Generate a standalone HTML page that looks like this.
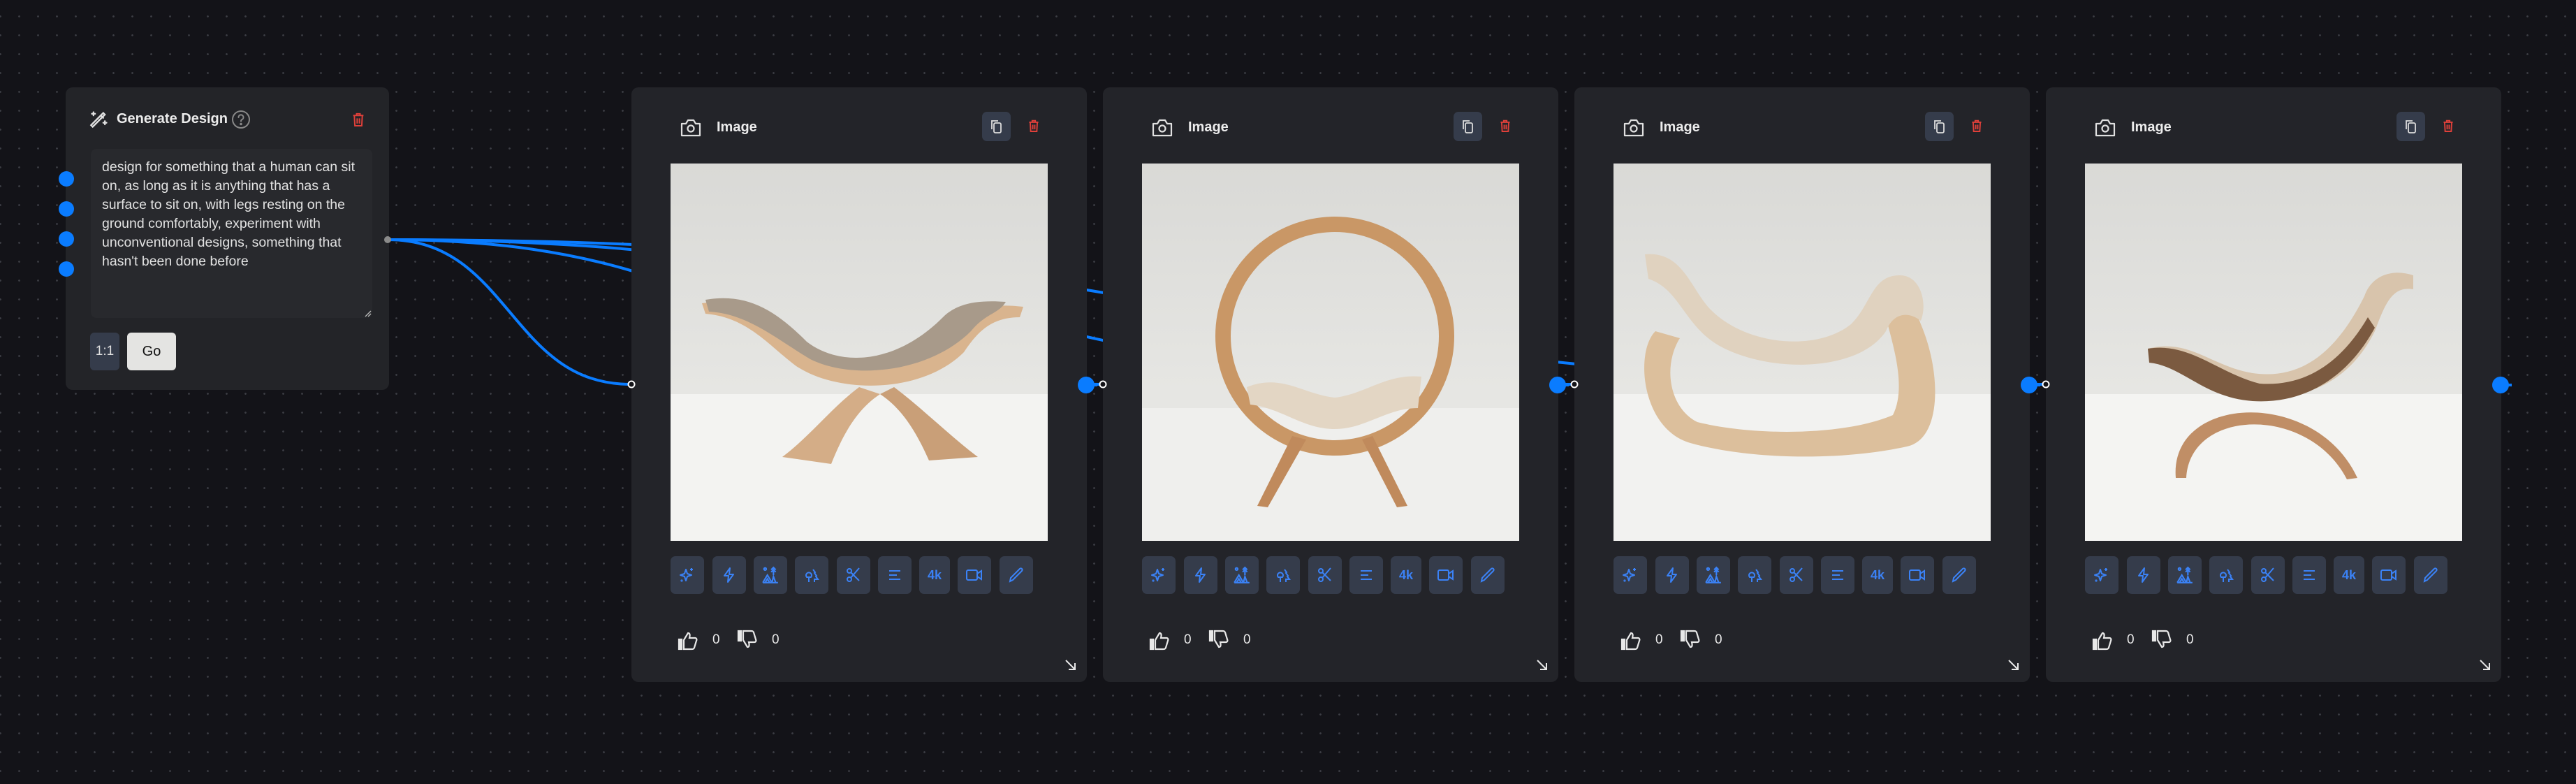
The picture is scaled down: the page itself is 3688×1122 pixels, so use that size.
<!DOCTYPE html>
<html><head><meta charset="utf-8"><style>
*{box-sizing:border-box;margin:0;padding:0}
body{width:3688px;height:1122px;overflow:hidden;background-color:#131318;background-image:radial-gradient(circle,#3c3d44 1.2px,transparent 1.6px);background-size:27px 27px;background-position:-13px 10px;font-family:"Liberation Sans",sans-serif;position:relative}
.abs{position:absolute}
.node{position:absolute;background:#232428;border-radius:10px}
.card{position:absolute;top:125px;width:652px;height:851px;background:#232429;border-radius:10px}
.cam{position:absolute;left:69px;top:44px}
.title{position:absolute;left:122px;top:46px;color:#ececec;font-size:20px;font-weight:bold}
.copy{position:absolute;left:502px;top:35px;width:41px;height:42px;background:#353c4b;border-radius:7px}
.trash{position:absolute;left:568px;top:45px}
.img{position:absolute;left:56px;top:109px;width:540px;height:540px;overflow:hidden}
.tb{position:absolute;top:671px;height:54px;width:48px;background:#353c4b;border-radius:7px;display:flex;align-items:center;justify-content:center;color:#3b82f6;font-weight:bold;font-size:18px}
.rs{position:absolute;left:620px;top:818px}
</style></head><body>
<svg class="abs" style="left:0;top:0" width="3688" height="1122">
<g fill="none" stroke="#0a7cff" stroke-width="4">
<path d="M555 343 C730 343 730 550 903 550"/>
<path d="M555 343 C1067 343 1067 550 1578 550"/>
<path d="M555 343 C1405 343 1405 550 2253 550"/>
<path d="M555 343 C1742 343 1742 550 2928 550"/>
</g>
</svg>

<div class="node" style="left:94px;top:125px;width:463px;height:433px"></div>
<svg class="abs" style="left:128px;top:157px" width="28" height="28" viewBox="0 0 24 24" fill="none" stroke="#e0e0e0" stroke-width="2" stroke-linecap="round"><path d="M4 21L19 6l-2-2L2 19z"/><path d="M14 7l3 3"/><path d="M5 3v4M3 5h4M19 14v4M17 16h4"/></svg>
<div class="abs" style="left:167px;top:159px;color:#ececec;font-size:20px;font-weight:bold">Generate Design</div>
<svg class="abs" style="left:331px;top:157px" width="28" height="28" viewBox="0 0 28 28" fill="none" stroke="#888" stroke-width="2"><circle cx="14" cy="14" r="12"/><path d="M10.5 11a3.5 3.5 0 1 1 5 3c-1 .6-1.5 1.2-1.5 2.5" stroke-linecap="round"/><circle cx="14" cy="20.5" r=".8" fill="#888"/></svg>
<svg class="abs" style="left:504px;top:160px" width="18" height="22" viewBox="0 0 22 26" fill="none" stroke="#e0403a" stroke-width="2.4"><path d="M2 6h18M8 6V3h6v3M4 6l1 18h12l1-18M9 11v9M13 11v9"/></svg>
<div class="abs" style="left:130px;top:213px;width:403px;height:242px;background:#28292d;border-radius:8px"></div>
<div class="abs" style="left:146px;top:226px;white-space:nowrap;color:#e2e2e2;font-size:19.5px;line-height:27px">design for something that a human can sit<br>on, as long as it is anything that has a<br>surface to sit on, with legs resting on the<br>ground comfortably, experiment with<br>unconventional designs, something that<br>hasn't been done before</div>
<svg class="abs" style="left:522px;top:444px" width="10" height="10"><path d="M1 9L9 1M5 9L9 5" stroke="#bbb" stroke-width="1.3"/></svg>
<div class="abs" style="left:129px;top:476px;width:42px;height:54px;background:#353c4b;border-radius:6px;color:#e0e0e0;font-size:19px;line-height:54px;text-align:center">1:1</div>
<div class="abs" style="left:182px;top:476px;width:70px;height:54px;background:#e4e4e2;border-radius:6px;color:#111;font-size:20px;line-height:54px;text-align:center">Go</div>

<svg class="abs" style="left:0;top:0;pointer-events:none" width="3688" height="1122">
<g fill="#0a7cff"><circle cx="95" cy="256" r="11"/><circle cx="95" cy="299" r="11"/><circle cx="95" cy="342" r="11"/><circle cx="95" cy="385" r="11"/></g>
<circle cx="555" cy="343" r="5" fill="#8a8a8a"/>
</svg>

<div class="card" style="left:904px"></div>
<div class="card" style="left:1579px"></div>
<div class="card" style="left:2254px"></div>
<div class="card" style="left:2929px"></div>

<div id="cards"></div>

<script>
const imgs=[
`<rect width="540" height="540" fill="url(#bg)"/><rect y="330" width="540" height="210" fill="#f3f3f1"/>
<path d="M160 420 L230 430 C250 380 270 350 300 330 L270 320 C230 350 200 390 160 420Z" fill="#d4ad87"/>
<path d="M440 420 L370 425 C350 380 330 350 300 330 L320 320 C360 350 400 390 440 420Z" fill="#c99f78"/>
<path d="M45 200 C120 190 150 220 190 260 C240 300 330 300 400 240 C430 205 460 200 505 205 L500 220 C460 220 440 240 420 270 C360 330 240 330 180 290 C140 260 110 220 50 215Z" fill="#d9b48e"/>
<path d="M50 195 C110 185 150 210 195 255 C240 290 320 290 390 220 C410 200 440 195 480 198 C470 215 450 215 430 240 C370 300 260 310 200 280 C150 250 110 215 55 212Z" fill="#a89a8a"/>`,
`<rect width="540" height="540" fill="url(#bg)"/><rect y="350" width="540" height="190" fill="#efefed"/>
<circle cx="276" cy="247" r="160" fill="none" stroke="#c99766" stroke-width="22"/>
<path d="M215 390 L165 490 L180 492 L235 395Z M330 390 L380 490 L365 492 L315 395Z" fill="#c08a5c"/>
<path d="M150 320 C200 300 230 330 276 335 C320 330 350 300 400 305 L395 350 C350 350 320 380 276 380 C230 380 200 350 155 345Z" fill="#e3d6c4"/>`,
`<rect width="540" height="540" fill="url(#bg)"/><rect y="330" width="540" height="210" fill="#f2f2f0"/>
<path d="M60 240 C30 270 40 380 110 400 C200 425 330 425 420 405 C470 395 470 300 440 230 C430 200 400 190 390 220 C400 260 420 320 400 360 C330 390 200 390 120 370 C80 350 70 290 95 250Z" fill="#dcbf9c"/>
<path d="M45 130 C100 125 110 180 140 210 C190 260 290 270 340 230 C370 200 370 160 410 160 C440 160 450 200 440 225 C420 210 400 215 390 240 C350 300 220 300 150 260 C100 230 95 180 50 165Z" fill="#e0d2bf"/>`,
`<rect width="540" height="540" fill="url(#bg)"/><rect y="330" width="540" height="210" fill="#f4f4f2"/>
<path d="M130 450 C120 330 330 320 390 450 L375 452 C320 345 150 350 145 450Z" fill="#c08e66"/>
<path d="M90 265 C150 250 180 290 240 300 C310 310 360 270 400 190 C410 160 440 150 470 160 L470 180 C440 175 430 200 415 240 C380 310 320 340 240 335 C170 330 140 290 95 285Z" fill="#d8c4ac"/>
<path d="M90 265 C150 255 190 300 250 315 C320 320 370 280 405 220 L415 235 C380 300 320 345 240 340 C170 335 140 290 92 285Z" fill="#7b5a40"/>`];
const icons=[
'<svg width="24" height="24" viewBox="0 0 24 24" fill="none" stroke="#3b82f6" stroke-width="2" stroke-linejoin="round"><path d="M10 4l2 6 6 2-6 2-2 6-2-6-6-2 6-2z"/><path d="M18 2v4M16 4h4"/><circle cx="4" cy="20" r=".6"/></svg>',
'<svg width="24" height="24" viewBox="0 0 24 24" fill="none" stroke="#3b82f6" stroke-width="2" stroke-linejoin="round"><path d="M13 2L5 13h6l-1 9 8-11h-6z"/></svg>',
'<svg width="26" height="26" viewBox="0 0 24 24" fill="none" stroke="#3b82f6" stroke-width="2"><circle cx="5" cy="4" r="1.5"/><path d="M16 2v10M13 5l3-3 3 3M13 8l3-3 3 3"/><path d="M2 22l6-10 6 10M5 22l3-5 3 5M2 22h20M14 22l2-8 3 8"/></svg>',
'<svg width="24" height="26" viewBox="0 0 24 24" fill="none" stroke="#3b82f6" stroke-width="2"><path d="M8 22v-6M5 15a4 4 0 1 1 6 0z"/><path d="M14 4l3 4-1 1 3 4-1 1 3 4h-5v4"/></svg>',
'<svg width="24" height="26" viewBox="0 0 24 24" fill="none" stroke="#3b82f6" stroke-width="2"><circle cx="6" cy="6" r="3"/><circle cx="6" cy="18" r="3"/><path d="M8 8l12 12M8 16L20 2"/></svg>',
'<svg width="24" height="24" viewBox="0 0 24 24" fill="none" stroke="#3b82f6" stroke-width="2"><path d="M4 6h16M4 12h11M4 18h16"/></svg>',
'4k',
'<svg width="26" height="24" viewBox="0 0 26 24" fill="none" stroke="#3b82f6" stroke-width="2"><rect x="2" y="5" width="15" height="14" rx="2"/><path d="M17 10l6-4v12l-6-4"/></svg>',
'<svg width="24" height="26" viewBox="0 0 24 24" fill="none" stroke="#3b82f6" stroke-width="2"><path d="M3 21l1-5L17 3a2 2 0 0 1 3 3L7 19z"/></svg>'];
const xs=[56,116,175,234,294,353,412,467,527];
let h='<svg width="0" height="0" style="position:absolute"><defs><linearGradient id="bg" x1="0" y1="0" x2="0" y2="1"><stop offset="0" stop-color="#d9d9d6"/><stop offset=".6" stop-color="#e6e6e3"/></linearGradient></defs></svg>';
[904,1579,2254,2929].forEach((L,i)=>{
 let c=`<div class="abs" style="left:${L}px;top:125px;width:652px;height:851px">`;
 c+=`<svg class="cam" width="32" height="28" viewBox="0 0 32 28" fill="none" stroke="#e0e0e0" stroke-width="2.2" stroke-linejoin="round"><path d="M3 8h6l3-5h8l3 5h6v17H3z"/><circle cx="16" cy="15" r="4.5"/></svg>`;
 c+=`<div class="title">Image</div><div class="copy"><svg style="margin:10px 0 0 11px" width="20" height="22" viewBox="0 0 20 22" fill="none" stroke="#ddd" stroke-width="1.8"><path d="M3 15V3h9"/><rect x="6" y="6" width="10" height="14" rx="2"/></svg></div>`;
 c+=`<svg class="trash" width="16" height="20" viewBox="0 0 22 26" fill="none" stroke="#e0403a" stroke-width="2.6"><path d="M2 6h18M8 6V3h6v3M4 6l1 18h12l1-18M9 11v9M13 11v9"/></svg>`;
 c+=`<svg class="img" viewBox="0 0 540 540">${imgs[i]}</svg>`;
 xs.forEach((x,j)=>{c+=`<div class="tb" style="left:${x}px;width:${j==6?44:48}px">${icons[j]}</div>`});
 c+=`<svg class="abs" style="left:66px;top:778px" width="30" height="28" viewBox="0 0 30 28" fill="none" stroke="#e8e8e8" stroke-width="2.2"><rect x="2" y="12" width="4" height="14" fill="#e8e8e8"/><path d="M9 13l6-10c3 0 3 3 2 7h8c2 0 3 2 2 4l-3 10c-1 2-2 2-4 2H9z"/></svg>`;
 c+=`<div class="abs" style="left:116px;top:780px;color:#e8e8e8;font-size:19px">0</div>`;
 c+=`<svg class="abs" style="left:151px;top:776px" width="30" height="28" viewBox="0 0 30 28" fill="none" stroke="#e8e8e8" stroke-width="2.2"><rect x="2" y="2" width="4" height="14" fill="#e8e8e8"/><path d="M9 15l6 10c3 0 3-3 2-7h8c2 0 3-2 2-4L24 4c-1-2-2-2-4-2H9z"/></svg>`;
 c+=`<div class="abs" style="left:201px;top:780px;color:#e8e8e8;font-size:19px">0</div>`;
 c+=`<svg class="rs" width="18" height="18" viewBox="0 0 18 18" fill="none" stroke="#e8e8e8" stroke-width="2"><path d="M2 2l13 13M6 15h9V6"/></svg>`;
 c+='</div>';
 c+=`<svg class="abs" style="left:${L-8}px;top:540px" width="20" height="20"><circle cx="8" cy="10" r="4.5" fill="#131318" stroke="#fff" stroke-width="2"/></svg>`;
 c+=`<svg class="abs" style="left:${L+637}px;top:538px" width="30" height="26"><line x1="14" y1="13" x2="30" y2="13" stroke="#0a7cff" stroke-width="4"/><circle cx="14" cy="13" r="12" fill="#0a7cff"/></svg>`;
 h+=c;
});
document.getElementById('cards').outerHTML=h;
</script>
</body></html>
